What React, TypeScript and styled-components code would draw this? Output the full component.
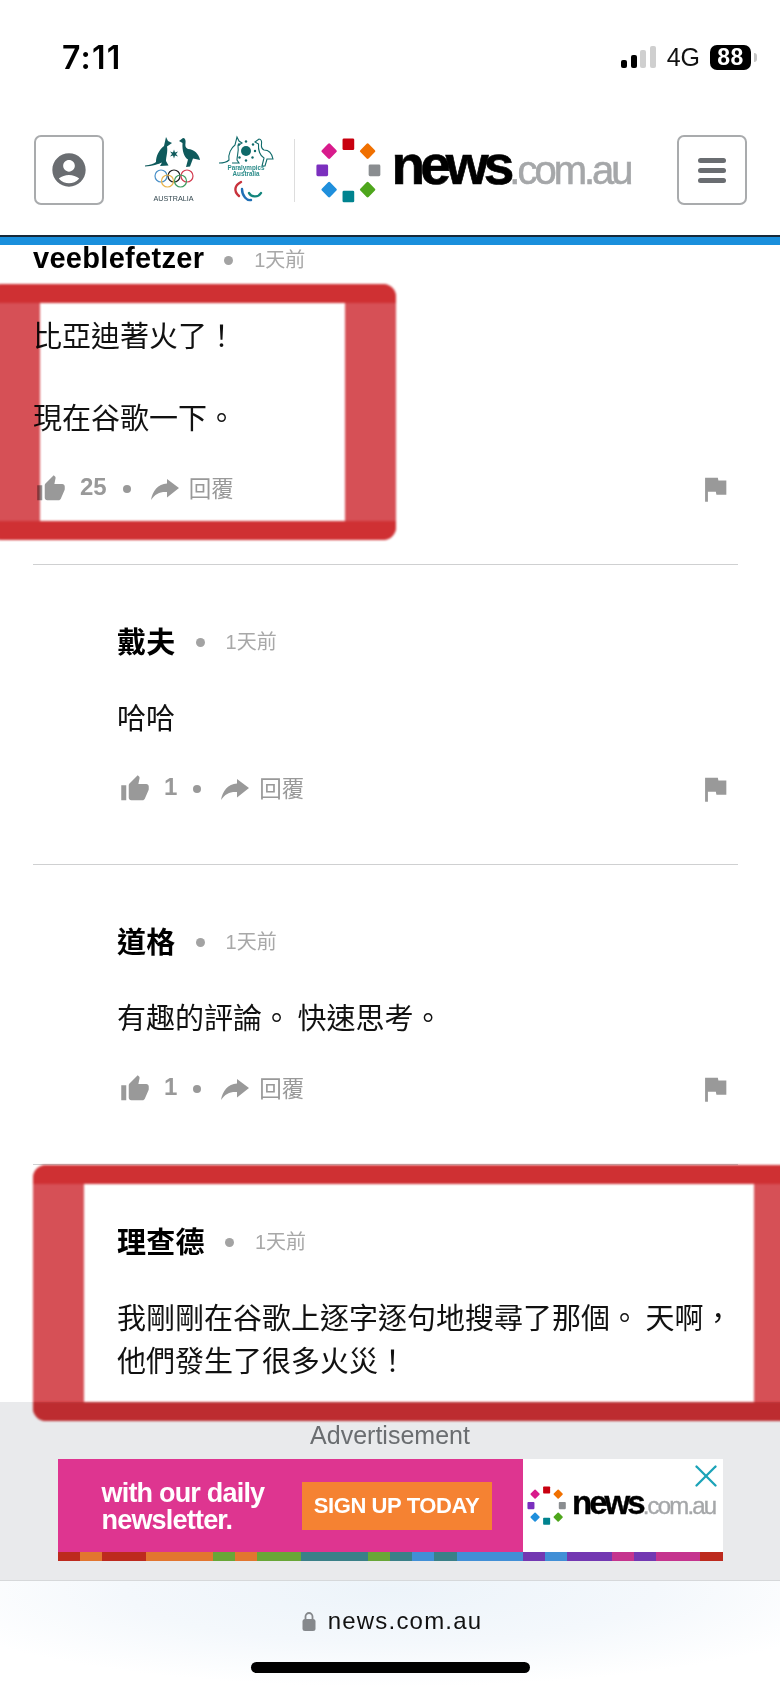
import React from 'react';
import styled, { createGlobalStyle } from 'styled-components';
import { MdFlag, MdAccountCircle, MdThumbUp } from 'react-icons/md';
import { X } from 'lucide-react';

const GlobalStyle = createGlobalStyle`
  * { box-sizing: border-box; }
  html, body { margin: 0; padding: 0; background: #fff; overflow: hidden; }
  body { font-family: "Liberation Sans", "Noto Sans CJK TC", sans-serif; }
`;

const Screen = styled.div`
  position: relative;
  isolation: isolate;
  width: 780px;
  height: 1689px;
  overflow: hidden;
  display: flex;
  flex-direction: column;
  background: #fff;
`;

const StatusBar = styled.div`
  flex: none;
  height: 114px;
  padding: 0 23px 0 62px;
  display: flex;
  align-items: center;
  justify-content: space-between;
`;

const Clock = styled.span`
  font-family: "Inter", "Liberation Sans", sans-serif;
  font-size: 32px;
  font-weight: 600;
  letter-spacing: 1.2px;
  color: #000;
`;

const StatusRight = styled.div`
  display: flex;
  align-items: center;
`;

const Signal = styled.div`
  display: flex;
  align-items: flex-end;
  gap: 3.5px;
  height: 22px;
  margin-right: 11px;
`;

const SignalBar = styled.i<{ $h: number; $on: boolean }>`
  display: block;
  width: 6px;
  height: ${(p) => p.$h}px;
  border-radius: 2px;
  background: ${(p) => (p.$on ? '#000' : '#cfcfcf')};
`;

const Network = styled.span`
  font-size: 25px;
  color: #111;
  margin-right: 10px;
`;

const Battery = styled.div`
  width: 41px;
  height: 25px;
  border-radius: 7px;
  background: #000;
  color: #fff;
  font-size: 23px;
  font-weight: 700;
  display: flex;
  align-items: center;
  justify-content: center;
  letter-spacing: 0.5px;
`;

const BatteryNub = styled.i`
  display: block;
  width: 3px;
  height: 9px;
  margin-left: 3px;
  border-radius: 0 3px 3px 0;
  background: #c4c4c4;
`;

const Header = styled.header`
  flex: none;
  height: 121px;
  padding: 0 33px 9px 34px;
  display: flex;
  align-items: center;
`;

const HeaderButton = styled.div`
  flex: none;
  width: 70px;
  height: 70px;
  border: 2px solid #a9abad;
  border-radius: 7px;
  display: flex;
  flex-direction: column;
  gap: 5px;
  align-items: center;
  justify-content: center;
  color: #6a6d71;
`;

const BurgerLine = styled.i`
  display: block;
  width: 28px;
  height: 5px;
  border-radius: 3px;
  background: #6a6d71;
`;

const Brand = styled.div`
  display: flex;
  align-items: center;
  margin-left: 39px;
  margin-right: auto;
`;

const SponsorMark = styled.svg`
  flex: none;
  display: block;
  width: 58px;
  height: 70px;
  margin-right: 17px;
`;

const BrandDivider = styled.i`
  display: block;
  flex: none;
  width: 1px;
  height: 63px;
  margin: 0 19px 0 1px;
  background: #ddd;
`;

const LogoRow = styled.div<{ $size: number }>`
  display: flex;
  align-items: center;
  font-size: ${(p) => p.$size}px;
  line-height: 1;
`;

const Ring = styled.svg`
  flex: none;
  display: block;
  width: 1.25em;
  height: 1.25em;
  margin-right: 0.16em;
`;

const Wordmark = styled.div`
  display: flex;
  align-items: baseline;
  margin-bottom: 0.17em;
`;

const WordNews = styled.span`
  font-weight: 700;
  letter-spacing: -0.09em;
  color: #000;
  -webkit-text-stroke: 0.012em #000;
`;

const WordDomain = styled.span`
  font-size: 0.727em;
  letter-spacing: -0.075em;
  color: #a5a7a9;
  -webkit-text-stroke: 0.015em #a5a7a9;
`;

const TopRule = styled.div`
  flex: none;
  height: 10px;
  background: #1a8fdc;
  border-top: 2px solid #16293a;
`;

const Feed = styled.main`
  flex: 1;
  min-height: 0;
`;

const FeedScroll = styled.div`
  margin-top: -62px;
  padding: 0 42px 0 33px;
`;

const Comment = styled.article<{ $reply: boolean }>`
  padding: 58px 0 60px ${(p) => (p.$reply ? 84 : 0)}px;
  border-bottom: 1px solid #cfd0d1;
  &:last-child {
    padding-bottom: 0;
    border-bottom: 0;
  }
`;

const CommentHead = styled.div`
  height: 34px;
  display: flex;
  align-items: center;
`;

const Author = styled.span`
  font-size: 29px;
  font-weight: 700;
  color: #000;
  letter-spacing: 0.3px;
`;

const Dot = styled.i`
  display: block;
  flex: none;
  width: 8px;
  height: 8px;
  border-radius: 50%;
  background: #a3a3a3;
`;

const HeadDot = styled(Dot)`
  width: 9px;
  height: 9px;
  margin: 4px 21px 0 20px;
`;

const Age = styled.span`
  font-size: 20px;
  color: #a8a8a8;
`;

const Body = styled.div`
  margin-top: 38px;
  font-family: "Noto Sans CJK TC", sans-serif;
  font-size: 29px;
  line-height: 43px;
  color: #111;
`;

const Para = styled.p`
  margin: 0 0 39px;
  &:last-child { margin-bottom: 0; }
`;

const Actions = styled.div`
  height: 30px;
  margin-top: 36px;
  display: flex;
  align-items: center;
  color: #999;
`;

const Thumb = styled(MdThumbUp)`
  flex: none;
  width: 30px;
  height: 30px;
  margin-left: 3px;
`;

const Likes = styled.span`
  font-size: 24px;
  font-weight: 700;
  line-height: 1;
  margin: -4px 0 0 14px;
`;

const ActionDot = styled(Dot)`
  margin: 0 20px 0 16px;
  background: #999;
`;

const ReplyArrow = styled.svg`
  flex: none;
  display: block;
  width: 28px;
  height: 24px;
  margin-top: 3px;
  fill: currentColor;
`;

const ReplyLabel = styled.span`
  font-family: "Noto Sans CJK TC", sans-serif;
  font-size: 22.5px;
  margin: -4px 0 0 10px;
`;

const Flag = styled(MdFlag)`
  flex: none;
  width: 34px;
  height: 34px;
  margin-left: auto;
  margin-right: 6px;
`;

const Annotation = styled.div<{ $left: number; $top: number; $width: number }>`
  position: absolute;
  z-index: 5;
  left: ${(p) => p.$left}px;
  top: ${(p) => p.$top}px;
  width: ${(p) => p.$width}px;
  height: 256px;
  padding: 19px 51px;
  border-radius: 13px;
  overflow: hidden;
  background: #d65056;
  mix-blend-mode: multiply;
  filter: blur(1px);
  &::before,
  &::after {
    content: '';
    position: absolute;
    left: 0;
    right: 0;
    height: 19px;
    background: #cf3033;
  }
  &::before { top: 0; }
  &::after { bottom: 0; }
`;

const AnnotationHole = styled.div`
  height: 100%;
  background: #fff;
`;

const AdPanel = styled.section`
  flex: none;
  height: 179px;
  padding-top: 17px;
  background: #e9eaec;
  border-bottom: 1px solid #d6d8da;
  display: flex;
  flex-direction: column;
  align-items: center;
`;

const AdLabel = styled.div`
  font-size: 25px;
  line-height: 32px;
  color: #6a6d70;
  margin-bottom: 8px;
`;

const Banner = styled.div`
  width: 665px;
  height: 102px;
  display: flex;
  flex-direction: column;
`;

const BannerMain = styled.div`
  flex: 1;
  display: flex;
`;

const BannerPink = styled.div`
  width: 465px;
  padding: 0 31px 0 44px;
  background: #de3590;
  display: flex;
  align-items: center;
  justify-content: space-between;
`;

const BannerCopy = styled.div`
  font-size: 27px;
  font-weight: 700;
  line-height: 27px;
  letter-spacing: -0.8px;
  color: #fff;
  margin-top: 2px;
`;

const SignUp = styled.div`
  width: 190px;
  height: 48px;
  background: #f58232;
  color: #fff;
  font-size: 22px;
  font-weight: 700;
  letter-spacing: -0.4px;
  display: flex;
  align-items: center;
  justify-content: center;
`;

const BannerWhite = styled.div`
  position: relative;
  flex: 1;
  padding-left: 3px;
  background: #fff;
  display: flex;
  align-items: center;
`;

const AdClose = styled(X)`
  position: absolute;
  top: -2px;
  right: -2px;
  width: 38px;
  height: 38px;
  color: #1ba3b8;
`;

const Stripe = styled.div`
  flex: none;
  height: 9px;
  display: flex;
`;

const StripeCell = styled.i<{ $units: number; $color: string }>`
  display: block;
  flex: ${(p) => p.$units};
  background: ${(p) => p.$color};
`;

const AddressArea = styled.footer`
  flex: none;
  height: 108px;
  padding: 27px 0 0 4px;
  background: radial-gradient(ellipse 62% 90% at 50% 8%, #edf4fa 0%, #f4f8fc 55%, #fff 100%);
  display: flex;
  flex-direction: column;
  align-items: center;
`;

const AddressRow = styled.div`
  display: flex;
  align-items: center;
  gap: 12px;
  height: 26px;
`;

const Lock = styled.svg`
  display: block;
  width: 14px;
  height: 20px;
`;

const Domain = styled.span`
  font-size: 24px;
  letter-spacing: 1.2px;
  color: #111;
`;

const HomeBar = styled.div`
  width: 279px;
  height: 11px;
  margin: 28px 4px 0 0;
  border-radius: 6px;
  background: #000;
`;

const RING_ITEMS = [
  { x: 50, y: 12, color: '#c8000f', turn: 0 },
  { x: 78, y: 22, color: '#f07000', turn: 45 },
  { x: 88, y: 50, color: '#8a8d90', turn: 0 },
  { x: 78, y: 78, color: '#4ea61c', turn: 45 },
  { x: 50, y: 88, color: '#00838f', turn: 0 },
  { x: 22, y: 78, color: '#1f8fdc', turn: 45 },
  { x: 12, y: 50, color: '#7b2fbe', turn: 0 },
  { x: 22, y: 22, color: '#d81b8c', turn: 45 },
];

const STRIPES: [number, string][] = [
  [1, '#bd2a1e'], [1, '#e2762f'], [2, '#bd2a1e'], [3, '#e2762f'], [1, '#68a637'],
  [1, '#e2762f'], [2, '#68a637'], [3, '#3a8088'], [1, '#68a637'], [1, '#3a8088'],
  [1, '#418fd6'], [1, '#3a8088'], [3, '#418fd6'], [1, '#7338b2'], [1, '#418fd6'],
  [2, '#7338b2'], [1, '#c5348e'], [1, '#7338b2'], [2, '#c5348e'], [1, '#bd2a1e'],
];

const COMMENTS = [
  { id: 1, author: 'veeblefetzer', reply: false, likes: 25, body: ['比亞迪著火了！', '現在谷歌一下。'] },
  { id: 2, author: '戴夫', reply: true, likes: 1, body: ['哈哈'] },
  { id: 3, author: '道格', reply: true, likes: 1, body: ['有趣的評論。 快速思考。'] },
  { id: 4, author: '理查德', reply: true, likes: 0, body: ['我剛剛在谷歌上逐字逐句地搜尋了那個。 天啊，他們發生了很多火災！'] },
];

const NewsLogo: React.FC<{ size: number }> = ({ size }) => (
  <LogoRow $size={size}>
    <Ring viewBox="0 0 100 100">
      {RING_ITEMS.map((item) => (
        <rect
          key={item.color}
          x={item.x - 8.5}
          y={item.y - 8.5}
          width="17"
          height="17"
          rx="2"
          fill={item.color}
          transform={`rotate(${item.turn} ${item.x} ${item.y})`}
        />
      ))}
    </Ring>
    <Wordmark>
      <WordNews>news</WordNews>
      <WordDomain>.com.au</WordDomain>
    </Wordmark>
  </LogoRow>
);

const OlympicMark = () => (
  <SponsorMark viewBox="0 0 58 70">
    <path
      d="M2 30.5C7 30 11 29 13 27C13 21 16 15 21 11L23 2L25 6L29 8L24 11.5C25 17 23 22 23 26L25.5 30.5L17 31L19 27.5C16 29 9 31 2 31.5Z"
      fill="#0f5a5c"
    />
    <path
      d="M36 6L40 3C42 3 43 5 42.5 8C42 11 42.5 13 45 14C51 14 56 19 57 25L50 23.5L47 31.5L43 32L45 24.5C41 22 39 16 39.5 8Z"
      fill="#0f5a5c"
    />
    <path d="M31 14.5L32 17.5L35 16.5L33 19L35 21.5L32 20.5L31 23.5L30 20.5L27 21.5L29 19L27 16.5L30 17.5Z" fill="#0f5a5c" />
    <g fill="none" strokeWidth="1.2">
      <circle cx="18" cy="41" r="6" stroke="#4a90c8" />
      <circle cx="31" cy="41" r="6" stroke="#222" />
      <circle cx="44" cy="41" r="6" stroke="#d33b4f" />
      <circle cx="24.5" cy="46" r="6" stroke="#e9b44c" />
      <circle cx="37.5" cy="46" r="6" stroke="#3e9c5f" />
    </g>
    <text x="30.5" y="66" textAnchor="middle" fontSize="7.2" fill="#33474f">AUSTRALIA</text>
  </SponsorMark>
);

const ParalympicMark = () => (
  <SponsorMark viewBox="0 0 58 70">
    <g fill="none" stroke="#0f6a6a" strokeWidth="1.1">
      <path d="M1 28C6 28 9 27 11 25C10 19 13 13 17 10L19 2L21 6L24 8L20 10.5C21 16 19 21 19 25L21 28H14" />
      <path d="M37 7L41 4C43 4 44 6 43.5 9C43 12 44 14 46 15C51 15 54 19 55 24H49L47 31H44L46 23C42 21 40 15 40.5 9Z" />
    </g>
    <circle cx="28" cy="16" r="5" fill="#0f6a6a" />
    <g fill="#0f6a6a">
      <circle cx="28" cy="6.5" r="1.2" />
      <circle cx="35" cy="9.5" r="1.2" />
      <circle cx="37" cy="16" r="1.2" />
      <circle cx="34.5" cy="22.5" r="1.2" />
      <circle cx="28" cy="25.5" r="1.2" />
      <circle cx="21.5" cy="22.5" r="1.2" />
      <circle cx="21" cy="9.5" r="1.2" />
    </g>
    <text x="28" y="34.5" textAnchor="middle" fontSize="6.3" fontWeight="700" fill="#2c8c8a">Paralympics</text>
    <text x="28" y="40.5" textAnchor="middle" fontSize="6.3" fontWeight="700" fill="#2c8c8a">Australia</text>
    <g fill="none" strokeWidth="2.4" strokeLinecap="round">
      <path d="M21 61C15 56 17 50 23 47" stroke="#c8323c" />
      <path d="M24 54C24 61 29 66 33 65" stroke="#1f6fb5" />
      <path d="M31 58C33 62 40 63 43 58" stroke="#12857c" />
    </g>
  </SponsorMark>
);

const App: React.FC = () => (
  <Screen>
    <GlobalStyle />
    <StatusBar>
      <Clock>7:11</Clock>
      <StatusRight>
        <Signal>
          <SignalBar $h={8} $on />
          <SignalBar $h={13} $on />
          <SignalBar $h={18} $on={false} />
          <SignalBar $h={22} $on={false} />
        </Signal>
        <Network>4G</Network>
        <Battery>88</Battery>
        <BatteryNub />
      </StatusRight>
    </StatusBar>

    <Header>
      <HeaderButton>
        <MdAccountCircle size={40} />
      </HeaderButton>
      <Brand>
        <OlympicMark />
        <ParalympicMark />
        <BrandDivider />
        <NewsLogo size={55} />
      </Brand>
      <HeaderButton>
        <BurgerLine />
        <BurgerLine />
        <BurgerLine />
      </HeaderButton>
    </Header>
    <TopRule />

    <Feed>
      <FeedScroll>
        {COMMENTS.map((c) => (
          <Comment key={c.id} $reply={c.reply}>
            <CommentHead>
              <Author>{c.author}</Author>
              <HeadDot />
              <Age>1天前</Age>
            </CommentHead>
            <Body>
              {c.body.map((line) => (
                <Para key={line}>{line}</Para>
              ))}
            </Body>
            {c.likes > 0 && (
              <Actions>
                <Thumb />
                <Likes>{c.likes}</Likes>
                <ActionDot />
                <ReplyArrow viewBox="0 0 28 24">
                  <path d="M16 0L28 9L16 18.5V13C9 12.5 4 15 0 21C1.5 12 7 5 16 4.5Z" />
                </ReplyArrow>
                <ReplyLabel>回覆</ReplyLabel>
                <Flag />
              </Actions>
            )}
          </Comment>
        ))}
      </FeedScroll>
    </Feed>

    <Annotation $left={-11} $top={284} $width={407}>
      <AnnotationHole />
    </Annotation>
    <Annotation $left={33} $top={1165} $width={772}>
      <AnnotationHole />
    </Annotation>

    <AdPanel>
      <AdLabel>Advertisement</AdLabel>
      <Banner>
        <BannerMain>
          <BannerPink>
            <BannerCopy>
              with our daily
              <br />
              newsletter.
            </BannerCopy>
            <SignUp>SIGN UP TODAY</SignUp>
          </BannerPink>
          <BannerWhite>
            <NewsLogo size={33} />
            <AdClose strokeWidth={1.5} />
          </BannerWhite>
        </BannerMain>
        <Stripe>
          {STRIPES.map(([units, color], i) => (
            <StripeCell key={i} $units={units} $color={color} />
          ))}
        </Stripe>
      </Banner>
    </AdPanel>

    <AddressArea>
      <AddressRow>
        <Lock viewBox="0 0 14 20">
          <path d="M3.5 9V5.5a3.5 3.5 0 0 1 7 0V9" fill="none" stroke="#85888c" strokeWidth="1.8" />
          <rect x="0.5" y="8" width="13" height="12" rx="2.5" fill="#85888c" />
        </Lock>
        <Domain>news.com.au</Domain>
      </AddressRow>
      <HomeBar />
    </AddressArea>
  </Screen>
);

export default App;
